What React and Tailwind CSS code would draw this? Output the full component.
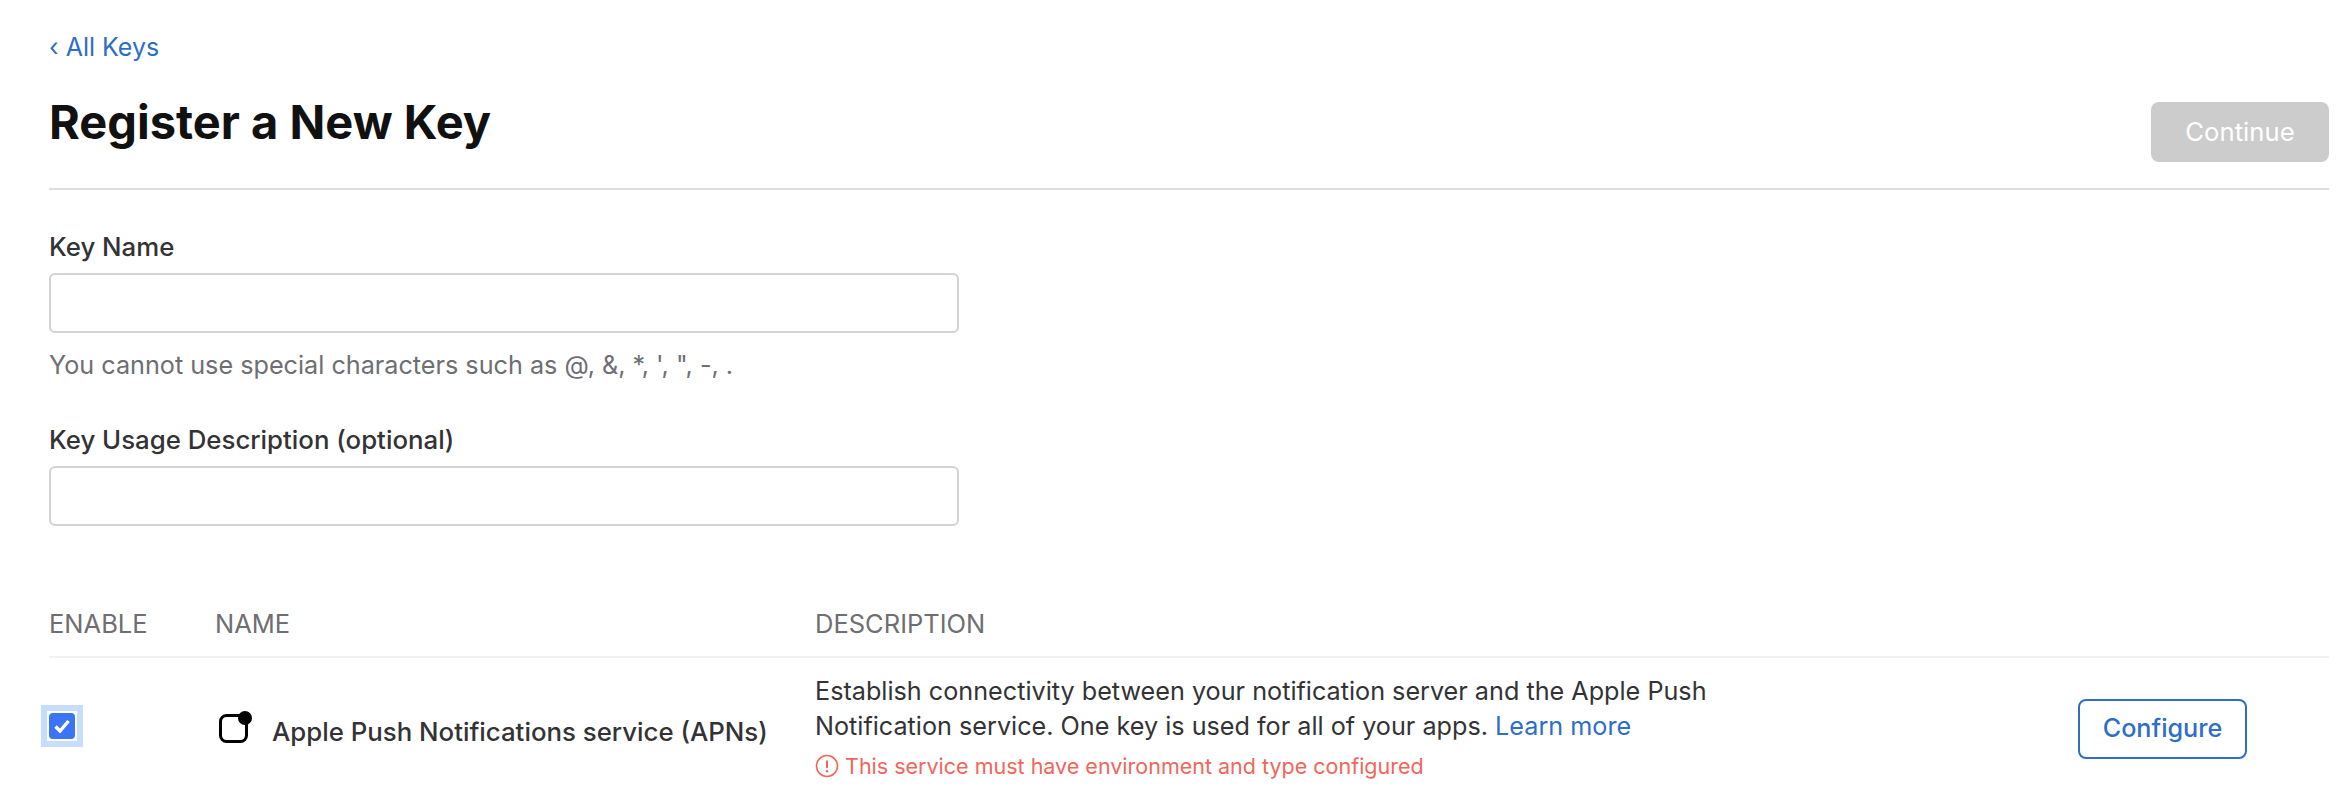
import React from 'react';

function Field({ label, help, className }) {
  return (
    <div className={className}>
      <label className="block text-[25.8px] leading-[32px] font-[450] text-[#333336]">{label}</label>
      <input type="text" className="block mt-[10px] w-[910px] h-[60px] bg-white border-2 border-[#d2d2d7] rounded-[6px]" />
      {help && <p className="mt-[16px] text-[25.2px] leading-[32px] text-[#6e6e73]">{help}</p>}
    </div>
  );
}

function App() {
  return (
    <div className="w-[2346px] h-[798px] bg-white pl-[49px] pr-[17px] overflow-hidden font-['Inter',sans-serif]">
      <a href="#" className="block pt-[31px] text-[25px] leading-[32px] text-[#2f6ec7]">‹ All Keys</a>

      <header className="flex justify-between items-start h-[127px] border-b-2 border-[#dedede]">
        <h1 className="mt-[31px] text-[47px] leading-[56px] font-bold text-[#111111]">Register a New Key</h1>
        <button className="mt-[39px] w-[178px] h-[60px] rounded-[8px] bg-[#cccccc] text-white text-[25.7px]">Continue</button>
      </header>

      <Field className="mt-[41px]" label="Key Name" help="You cannot use special characters such as @, &, *, ', &quot;, -, ." />
      <Field className="mt-[43px]" label="Key Usage Description (optional)" />

      <div className="mt-[82px] flex h-[50px] border-b-2 border-[#f2f2f2] text-[25.5px] leading-[32px] text-[#6e6e73]">
        <div className="w-[166px]">ENABLE</div>
        <div className="w-[600px]">NAME</div>
        <div>DESCRIPTION</div>
      </div>

      <div className="flex mt-[16px]">
        <div className="w-[166px] pt-[31px]">
          <div className="-ml-[8px] w-[42px] h-[42px] bg-[#c8dcfd] flex items-center justify-center">
            <div className="w-[30px] h-[30px] bg-white flex items-center justify-center">
              <div className="w-[26px] h-[26px] rounded-[4px] bg-[#3b74f5] flex items-center justify-center">
                <svg width="20" height="20" viewBox="0 0 20 20" fill="none">
                  <path d="M3.5 10.5 L8 15 L16.5 5" stroke="white" strokeWidth="3.4" />
                </svg>
              </div>
            </div>
          </div>
        </div>

        <div className="w-[600px] flex items-start pt-[37px]">
          <svg width="34" height="33" viewBox="0 0 34 33" fill="none" className="ml-[3px] shrink-0">
            <rect x="2.5" y="4.5" width="26" height="26" rx="6" stroke="black" strokeWidth="3" />
            <circle cx="27" cy="7" r="7" fill="black" />
          </svg>
          <span className="ml-[20px] mt-[5px] text-[25.8px] leading-[32px] font-[450] text-[#333336]">Apple Push Notifications service (APNs)</span>
        </div>

        <div className="w-[920px]">
          <p className="text-[25.2px] leading-[35px] text-[#333336]">
            Establish connectivity between your notification server and the Apple Push<br />
            Notification service. One key is used for all of your apps. <a href="#" className="text-[#2f6ec7]">Learn more</a>
          </p>
          <p className="mt-[8px] flex items-center text-[21.5px] leading-[28px] text-[#f0665a]">
            <svg width="24" height="24" viewBox="0 0 24 24" fill="none" className="mr-[6px]">
              <circle cx="12" cy="12" r="10.5" stroke="#f0665a" strokeWidth="1.6" />
              <path d="M12 6.5V14" stroke="#f0665a" strokeWidth="2" />
              <circle cx="12" cy="17.3" r="1.2" fill="#f0665a" />
            </svg>
            This service must have environment and type configured
          </p>
        </div>

        <div className="flex-1 flex justify-end pr-[82px] pt-[25px]">
          <button className="w-[169px] h-[60px] rounded-[8px] border-2 border-[#2f6ec7] text-[#2f6ec7] text-[25.2px] font-medium">Configure</button>
        </div>
      </div>
    </div>
  );
}

export default App;
